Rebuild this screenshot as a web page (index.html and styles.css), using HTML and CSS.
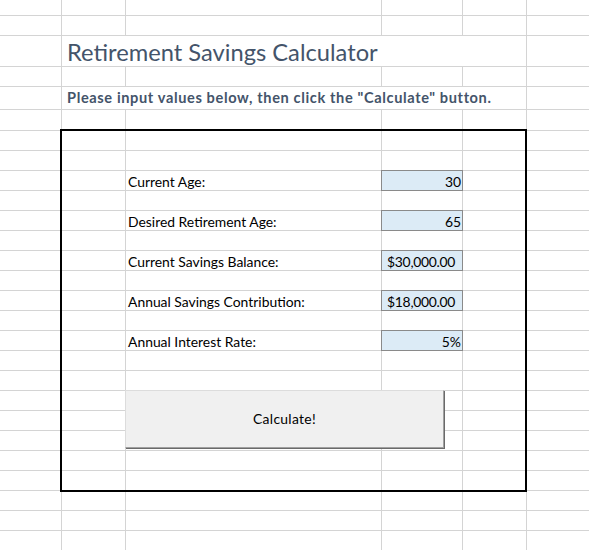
FILE: index.html
```html
<!DOCTYPE html>
<html>
<head>
<meta charset="utf-8">
<link rel="stylesheet" href="styles.css">
<title>Retirement Savings Calculator</title>
</head>
<body>
<div class="sheet">
  <div class="grid">
    <!-- row 1 -->
    <div class="c"></div><div class="c"></div><div class="c"></div><div class="c"></div><div class="c"></div><div class="c"></div>
    <!-- row 2 -->
    <div class="c"></div><div class="c"></div><div class="c"></div><div class="c"></div><div class="c"></div><div class="c"></div>
    <!-- row 3 title -->
    <div class="c"></div><div class="c span title">Retirement Savings Calculator</div><div class="c"></div>
    <!-- row 4 -->
    <div class="c"></div><div class="c"></div><div class="c"></div><div class="c"></div><div class="c"></div><div class="c"></div>
    <!-- row 5 subtitle -->
    <div class="c"></div><div class="c span subtitle">Please input values below, then click the "Calculate" button.</div><div class="c"></div>
    <!-- row 6 -->
    <div class="c"></div><div class="c"></div><div class="c"></div><div class="c"></div><div class="c"></div><div class="c"></div>
    <!-- row 7 -->
    <div class="c"></div><div class="c"></div><div class="c"></div><div class="c"></div><div class="c"></div><div class="c"></div>
    <!-- row 8 -->
    <div class="c"></div><div class="c"></div><div class="c"></div><div class="c"></div><div class="c"></div><div class="c"></div>
    <!-- row 9 -->
    <div class="c"></div><div class="c"></div><div class="c label">Current Age:</div><div class="c input num">30</div><div class="c"></div><div class="c"></div>
    <!-- row 10 -->
    <div class="c"></div><div class="c"></div><div class="c"></div><div class="c"></div><div class="c"></div><div class="c"></div>
    <!-- row 11 -->
    <div class="c"></div><div class="c"></div><div class="c label">Desired Retirement Age:</div><div class="c input num">65</div><div class="c"></div><div class="c"></div>
    <!-- row 12 -->
    <div class="c"></div><div class="c"></div><div class="c"></div><div class="c"></div><div class="c"></div><div class="c"></div>
    <!-- row 13 -->
    <div class="c"></div><div class="c"></div><div class="c label">Current Savings Balance:</div><div class="c input money">$30,000.00</div><div class="c"></div><div class="c"></div>
    <!-- row 14 -->
    <div class="c"></div><div class="c"></div><div class="c"></div><div class="c"></div><div class="c"></div><div class="c"></div>
    <!-- row 15 -->
    <div class="c"></div><div class="c"></div><div class="c label">Annual Savings Contribution:</div><div class="c input money">$18,000.00</div><div class="c"></div><div class="c"></div>
    <!-- row 16 -->
    <div class="c"></div><div class="c"></div><div class="c"></div><div class="c"></div><div class="c"></div><div class="c"></div>
    <!-- row 17 -->
    <div class="c"></div><div class="c"></div><div class="c label">Annual Interest Rate:</div><div class="c input num">5%</div><div class="c"></div><div class="c"></div>
    <!-- rows 18-27 -->
    <div class="c"></div><div class="c"></div><div class="c"></div><div class="c"></div><div class="c"></div><div class="c"></div>
    <div class="c"></div><div class="c"></div><div class="c"></div><div class="c"></div><div class="c"></div><div class="c"></div>
    <div class="c"></div><div class="c"></div><div class="c"></div><div class="c"></div><div class="c"></div><div class="c"></div>
    <div class="c"></div><div class="c"></div><div class="c"></div><div class="c"></div><div class="c"></div><div class="c"></div>
    <div class="c"></div><div class="c"></div><div class="c"></div><div class="c"></div><div class="c"></div><div class="c"></div>
    <div class="c"></div><div class="c"></div><div class="c"></div><div class="c"></div><div class="c"></div><div class="c"></div>
    <div class="c"></div><div class="c"></div><div class="c"></div><div class="c"></div><div class="c"></div><div class="c"></div>
    <div class="c"></div><div class="c"></div><div class="c"></div><div class="c"></div><div class="c"></div><div class="c"></div>
    <div class="c"></div><div class="c"></div><div class="c"></div><div class="c"></div><div class="c"></div><div class="c"></div>
    <div class="c"></div><div class="c"></div><div class="c"></div><div class="c"></div><div class="c"></div><div class="c"></div>
  </div>
  <div class="frame"></div>
  <button class="calc" type="button">Calculate!</button>
</div>
</body>
</html>
```
FILE: styles.css
```css
html, body {
  margin: 0;
  padding: 0;
  background: #ffffff;
  overflow: hidden;
}

.sheet {
  position: relative;
  width: 589px;
  height: 550px;
  overflow: hidden;
}

.grid {
  display: grid;
  grid-template-columns: 61px 63px 255px 80px 63px 1fr;
  grid-template-rows: 15px 19px 30px 19px 22px 20px repeat(21, 19px);
  gap: 1px;
  background: #d4d4d4;
  height: 550px;
  font-family: "Lato", "Liberation Sans", sans-serif;
  font-size: 13.9px;
  color: #000000;
}

.c {
  background: #ffffff;
  display: flex;
  align-items: flex-end;
  line-height: 16px;
  white-space: nowrap;
  min-width: 0;
}

.span {
  grid-column: 2 / 6;
}

.title {
  font-weight: 400;
  font-size: 23.7px;
  line-height: 28px;
  color: #44546a;
  padding-left: 5px;
}

.subtitle {
  font-weight: 700;
  font-size: 14.6px;
  line-height: 16px;
  color: #44546a;
  padding-left: 5px;
  padding-bottom: 3px;
  letter-spacing: 0.62px;
}

.label {
  padding-left: 2px;
}

.input {
  background: #dcebf6;
  outline: 1px solid #8a8a8a;
  justify-content: flex-end;
}

.num {
  padding-right: 1px;
}

.money {
  padding-right: 7px;
  letter-spacing: -0.3px;
}

.frame {
  position: absolute;
  left: 60px;
  top: 129px;
  width: 467px;
  height: 363px;
  box-sizing: border-box;
  border: 2px solid #000000;
  pointer-events: none;
}

.calc {
  position: absolute;
  left: 125px;
  top: 390px;
  width: 319px;
  height: 58px;
  box-sizing: border-box;
  margin: 0;
  padding: 0;
  background: #f0f0f0;
  border-top: 1px solid #dcdcdc;
  border-left: 1px solid #dcdcdc;
  border-right: 1px solid #a0a0a0;
  border-bottom: 1px solid #a0a0a0;
  box-shadow: 1px 1px 0 #6a6a6a;
  font-family: "Lato", "Liberation Sans", sans-serif;
  font-size: 13.9px;
  letter-spacing: 0.3px;
  color: #000000;
  line-height: 16px;
}
```
